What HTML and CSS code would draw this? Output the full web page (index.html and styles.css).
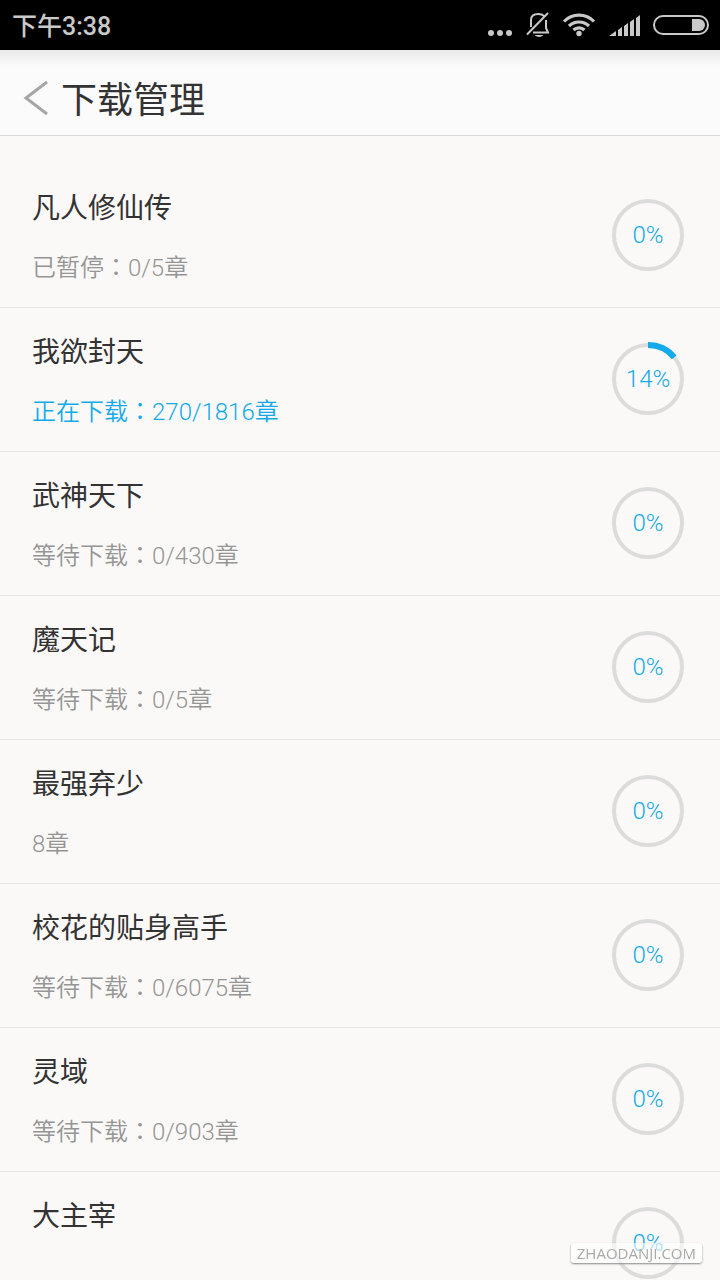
FILE: index.html
```html
<!DOCTYPE html>
<html lang="zh-CN">
  <head>
    <meta charset="utf-8">
    <meta name="viewport" content="width=device-width, initial-scale=1">
    <title>下载管理</title>
    <link rel="stylesheet" href="styles.css">
  </head>
  <body>
    <div class="statusbar">
      <span class="time">下午3:38</span>
      <div class="icons">
        <svg width="26" height="30" viewBox="0 0 26 30" fill="#c9c9c9">
          <circle cx="3" cy="23" r="3" />
          <circle cx="12" cy="23" r="3" />
          <circle cx="21" cy="23" r="3" />
        </svg>
        <svg width="24" height="30" viewBox="0 0 24 30" fill="none" stroke="#c9c9c9" stroke-width="2">
          <path d="M5 17V10C5 6 8 4 12.500 4C15 4 17 5 18 6M20 10V18L22 22.500H7M1 24.500L22 3" />
          <path d="M8.500 25H17.500Q13 29 8.500 25Z" fill="#c9c9c9" stroke="none" />
        </svg>
        <svg width="34" height="30" viewBox="0 0 34 30" fill="none" stroke="#c9c9c9" stroke-width="3.200">
          <path d="M2 11.500A21 21 0 0 1 32 11.500M7 16A14.500 14.500 0 0 1 27 16M11.500 20A8 8 0 0 1 22.500 20" />
          <circle cx="17" cy="23.500" r="2.700" fill="#c9c9c9" stroke="none" />
        </svg>
        <svg width="32" height="30" viewBox="0 0 32 30" fill="#c9c9c9">
          <path d="M1 26L8 21V26ZM10 20L14 17V26H10ZM16 16L20 13V26H16ZM22 12L26 9V26H22ZM28 8L32 5V26H28Z" />
        </svg>
        <svg width="58" height="30" viewBox="0 0 58 30">
          <rect x="2" y="6" width="54" height="18" rx="9" fill="none" stroke="#c9c9c9" stroke-width="2" />
          <path d="M40 9H47A6 6 0 0 1 47 21H40Z" fill="#c9c9c9" />
        </svg>
      </div>
    </div>

    <div class="header">
      <button class="back" type="button" aria-label="返回">
        <svg width="26" height="36" viewBox="0 0 26 36" fill="none" stroke="#a6a6a6" stroke-width="3">
          <path d="M24 2L3 18L24 34" />
        </svg>
      </button>
      <h1>下载管理</h1>
    </div>

    <ul class="list">
      <li class="item">
        <div class="info">
          <h2>凡人修仙传</h2>
          <p>已暂停<span class="colon" lang="zh-TW">：</span>0/5章</p>
        </div>
        <div class="ring">
          <svg viewBox="0 0 72 72"><circle cx="36" cy="36" r="34" /></svg>
          <span>0%</span>
        </div>
      </li>
      <li class="item active">
        <div class="info">
          <h2>我欲封天</h2>
          <p>正在下载<span class="colon" lang="zh-TW">：</span>270/1816章</p>
        </div>
        <div class="ring">
          <svg viewBox="0 0 72 72">
            <circle cx="36" cy="36" r="34" />
            <circle class="arc" cx="36" cy="36" r="34" pathLength="100" stroke-dasharray="14 86" transform="rotate(-90 36 36)" />
          </svg>
          <span>14%</span>
        </div>
      </li>
      <li class="item">
        <div class="info">
          <h2>武神天下</h2>
          <p>等待下载<span class="colon" lang="zh-TW">：</span>0/430章</p>
        </div>
        <div class="ring">
          <svg viewBox="0 0 72 72"><circle cx="36" cy="36" r="34" /></svg>
          <span>0%</span>
        </div>
      </li>
      <li class="item">
        <div class="info">
          <h2>魔天记</h2>
          <p>等待下载<span class="colon" lang="zh-TW">：</span>0/5章</p>
        </div>
        <div class="ring">
          <svg viewBox="0 0 72 72"><circle cx="36" cy="36" r="34" /></svg>
          <span>0%</span>
        </div>
      </li>
      <li class="item">
        <div class="info">
          <h2>最强弃少</h2>
          <p>8章</p>
        </div>
        <div class="ring">
          <svg viewBox="0 0 72 72"><circle cx="36" cy="36" r="34" /></svg>
          <span>0%</span>
        </div>
      </li>
      <li class="item">
        <div class="info">
          <h2>校花的贴身高手</h2>
          <p>等待下载<span class="colon" lang="zh-TW">：</span>0/6075章</p>
        </div>
        <div class="ring">
          <svg viewBox="0 0 72 72"><circle cx="36" cy="36" r="34" /></svg>
          <span>0%</span>
        </div>
      </li>
      <li class="item">
        <div class="info">
          <h2>灵域</h2>
          <p>等待下载<span class="colon" lang="zh-TW">：</span>0/903章</p>
        </div>
        <div class="ring">
          <svg viewBox="0 0 72 72"><circle cx="36" cy="36" r="34" /></svg>
          <span>0%</span>
        </div>
      </li>
      <li class="item">
        <div class="info">
          <h2>大主宰</h2>
          <p></p>
        </div>
        <div class="ring">
          <svg viewBox="0 0 72 72"><circle cx="36" cy="36" r="34" /></svg>
          <span>0%</span>
        </div>
      </li>
    </ul>

    <div class="watermark">ZHAODANJI.COM</div>
  </body>
</html>
```
FILE: styles.css
```css
* {
  box-sizing: border-box;
}
body {
  margin: 0;
  height: 100vh;
  overflow: hidden;
  display: flex;
  flex-direction: column;
  background-color: #faf9f7;
  color: #333;
  font-family: Roboto, "Noto Sans CJK SC", sans-serif;
}
h1,
h2,
p,
ul {
  margin: 0;
  padding: 0;
}
svg {
  display: block;
}

/* status bar */
.statusbar {
  flex: none;
  display: flex;
  justify-content: space-between;
  align-items: center;
  height: 50px;
  padding: 0 10px 0 12px;
  background-color: #000;
}
.time {
  padding-bottom: 3px;
  color: #c9c9c9;
  font-size: 25px;
  font-weight: 500;
}
.icons {
  display: flex;
  gap: 12px;
}

/* title */
.header {
  flex: none;
  display: flex;
  align-items: center;
  height: 86px;
  padding: 10px 24px 0 23px;
  border-bottom: 1px solid #d9d9d9;
  background: linear-gradient(#e8e8e8, #fbfbfb 16px);
}
.back {
  padding: 0;
  border: 0;
  background: none;
}
.header h1 {
  margin-left: 12px;
  padding-bottom: 2px;
  font-size: 36px;
  font-weight: 400;
}

/* downloads */
.list {
  flex: 1;
  min-height: 0;
  overflow: hidden;
  padding-top: 28px;
  list-style: none;
}
.item {
  display: flex;
  justify-content: space-between;
  align-items: center;
  height: 144px;
  padding: 0 36px 1px 32px;
  border-bottom: 1px solid #e6e6e6;
}
.info {
  padding-top: 7px;
}
.info h2 {
  line-height: 36px;
  font-size: 28px;
  font-weight: 400;
}
.info p {
  min-height: 36px;
  margin-top: 23px;
  line-height: 36px;
  font-size: 24px;
  font-weight: 350;
  color: #959595;
}
.colon {
  font-family: "Noto Sans CJK TC", sans-serif;
  line-height: 1;
}
.info .active p,
.active p {
  color: #13aaeb;
}
.ring {
  display: grid;
  place-items: center;
  width: 72px;
  height: 72px;
}
.ring svg,
.ring span {
  grid-area: 1 / 1;
}
.ring svg {
  width: 72px;
  height: 72px;
  overflow: visible;
  fill: none;
  stroke: #dcdcdc;
  stroke-width: 4;
}
.ring .arc {
  stroke: #13aaeb;
  stroke-width: 6;
}
.ring span {
  color: #13aaeb;
  font-size: 24px;
  font-weight: 350;
}

.watermark {
  position: fixed;
  right: 18px;
  bottom: 17px;
  padding: 0 6px;
  border-radius: 3px;
  background-color: rgba(255, 255, 255, 0.6);
  box-shadow: 0 1px 2px #888;
  color: #aaa;
  font-family: "Open Sans", sans-serif;
  font-size: 15px;
  line-height: 20px;
}
```
